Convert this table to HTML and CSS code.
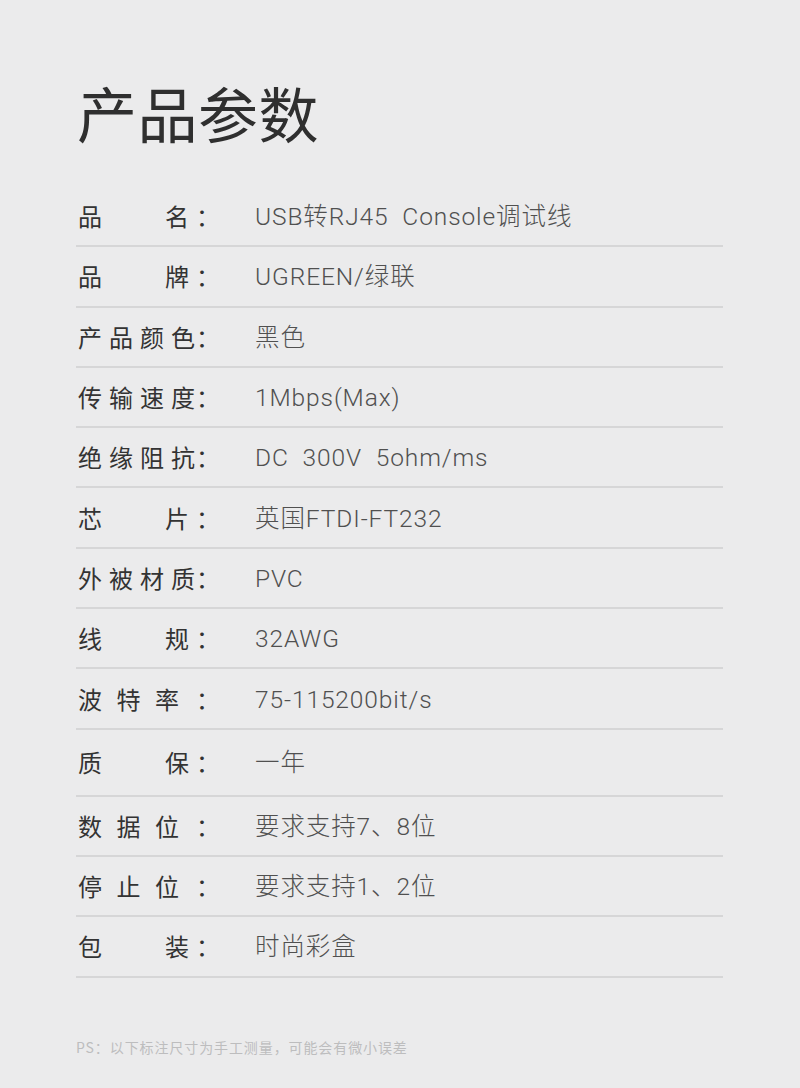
FILE: index.html
```html
<!DOCTYPE html>
<html lang="zh-CN">
<head>
<meta charset="utf-8">
<title>产品参数</title>
<link rel="stylesheet" href="styles.css">
</head>
<body>
<div class="page">
  <h1 class="title">产品参数</h1>
  <div class="table">
    <div class="row"><span class="label l2"><span>品</span><span>名</span></span><span class="colon">：</span><span class="value">USB转RJ45&nbsp;&nbsp;Console调试线</span></div>
    <div class="row"><span class="label l2"><span>品</span><span>牌</span></span><span class="colon">：</span><span class="value">UGREEN/绿联</span></div>
    <div class="row"><span class="label l4"><span>产</span><span>品</span><span>颜</span><span>色</span></span><span class="colon">：</span><span class="value">黑色</span></div>
    <div class="row"><span class="label l4"><span>传</span><span>输</span><span>速</span><span>度</span></span><span class="colon">：</span><span class="value">1Mbps(Max)</span></div>
    <div class="row"><span class="label l4"><span>绝</span><span>缘</span><span>阻</span><span>抗</span></span><span class="colon">：</span><span class="value">DC&nbsp;&nbsp;300V&nbsp;&nbsp;5ohm/ms</span></div>
    <div class="row"><span class="label l2"><span>芯</span><span>片</span></span><span class="colon">：</span><span class="value">英国FTDI-FT232</span></div>
    <div class="row"><span class="label l4"><span>外</span><span>被</span><span>材</span><span>质</span></span><span class="colon">：</span><span class="value">PVC</span></div>
    <div class="row"><span class="label l2"><span>线</span><span>规</span></span><span class="colon">：</span><span class="value">32AWG</span></div>
    <div class="row"><span class="label l3"><span>波</span><span>特</span><span>率</span></span><span class="colon">：</span><span class="value">75-115200bit/s</span></div>
    <div class="row tall"><span class="label l2"><span>质</span><span>保</span></span><span class="colon">：</span><span class="value">一年</span></div>
    <div class="row"><span class="label l3"><span>数</span><span>据</span><span>位</span></span><span class="colon">：</span><span class="value">要求支持7、8位</span></div>
    <div class="row"><span class="label l3"><span>停</span><span>止</span><span>位</span></span><span class="colon">：</span><span class="value">要求支持1、2位</span></div>
    <div class="row"><span class="label l2"><span>包</span><span>装</span></span><span class="colon">：</span><span class="value">时尚彩盒</span></div>
  </div>
  <p class="note">PS：以下标注尺寸为手工测量，可能会有微小误差</p>
</div>
</body>
</html>
```
FILE: styles.css
```css
html, body {
  margin: 0;
  padding: 0;
  background: #ebebec;
}
body {
  font-family: "Noto Sans CJK SC", "Noto Sans", sans-serif;
  color: #333;
}
.page {
  width: 647px;
  margin-left: 76px;
  padding-top: 72px;
  height: 1088px;
  box-sizing: border-box;
}
.title {
  margin: 0 0 35px 1px;
  font-size: 60px;
  line-height: 80px;
  font-weight: 400;
  color: #2f2f2f;
  letter-spacing: 0.5px;
}
.table {
  display: flex;
  flex-direction: column;
}
.row {
  display: flex;
  align-items: center;
  height: 60.3px;
  box-sizing: border-box;
  border-bottom: 2px solid #d6d6d7;
  padding-left: 2px;
}
.row.tall {
  height: 67px;
}
.label {
  display: flex;
  justify-content: space-between;
  font-size: 24px;
  line-height: 32px;
  color: #333;
  white-space: nowrap;
}
.label.l2 {
  width: 111px;
  margin-right: 7px;
}
.label.l4 {
  width: 117px;
  margin-right: 1px;
}
.label.l3 {
  width: 101px;
  margin-right: 17px;
}
.colon {
  width: 59px;
  font-size: 24px;
  line-height: 32px;
  color: #333;
}
.value {
  font-family: "Roboto", "Noto Sans CJK SC", sans-serif;
  font-weight: 300;
  font-size: 24.5px;
  line-height: 32px;
  padding-top: 2px;
  color: #505050;
  letter-spacing: 0.9px;
  white-space: nowrap;
}
.note {
  margin: 59px 0 0 0;
  font-size: 14px;
  line-height: 20px;
  color: #bdbdbe;
  letter-spacing: 0.9px;
}
```
